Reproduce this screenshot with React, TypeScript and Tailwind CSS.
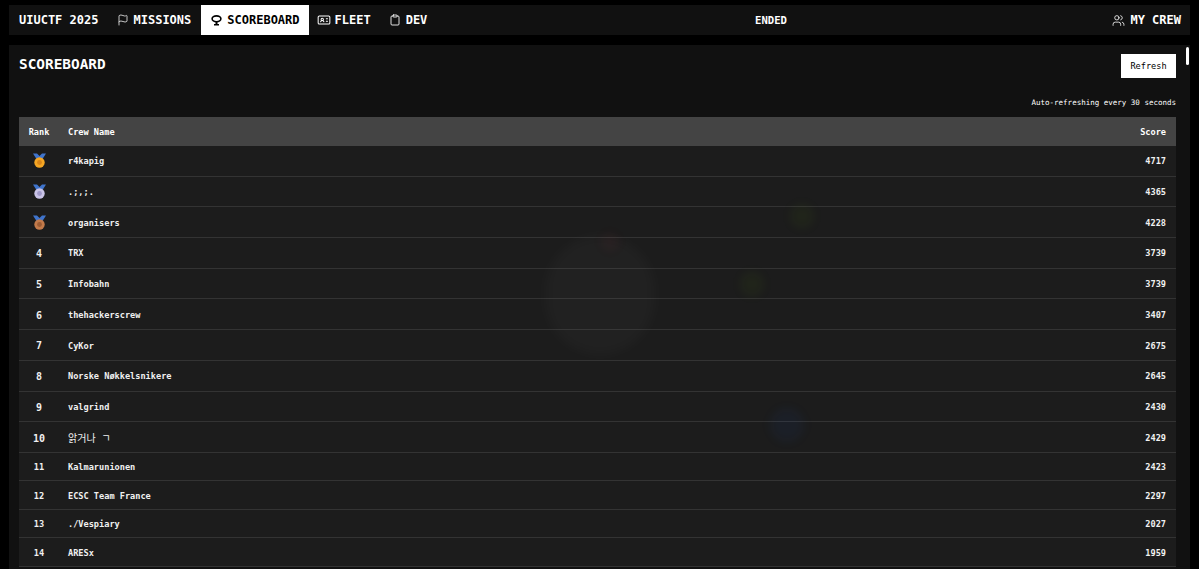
import { Clipboard, Flag, IdCard, Users } from "lucide-react";

const rows = [
  { rank: 1, name: "r4kapig", score: 4717 },
  { rank: 2, name: ".;,;.", score: 4365 },
  { rank: 3, name: "organisers", score: 4228 },
  { rank: 4, name: "TRX", score: 3739 },
  { rank: 5, name: "Infobahn", score: 3739 },
  { rank: 6, name: "thehackerscrew", score: 3407 },
  { rank: 7, name: "CyKor", score: 2675 },
  { rank: 8, name: "Norske Nøkkelsnikere", score: 2645 },
  { rank: 9, name: "valgrind", score: 2430 },
  { rank: 10, name: "앍거나 ㄱ", score: 2429 },
  { rank: 11, name: "Kalmarunionen", score: 2423 },
  { rank: 12, name: "ECSC Team France", score: 2297 },
  { rank: 13, name: "./Vespiary", score: 2027 },
  { rank: 14, name: "ARESx", score: 1959 },
];

const medalColors: Record<number, { disc: string; inner: string }> = {
  1: { disc: "#f5a623", inner: "#d9851a" },
  2: { disc: "#c9c3e6", inner: "#9f98c8" },
  3: { disc: "#c27a4a", inner: "#9c5c34" },
};

function Medal({ rank }: { rank: number }) {
  const c = medalColors[rank];
  return (
    <svg width="13" height="15" viewBox="0 0 13 15" className="mx-auto -mt-[2px]">
      <path d="M0 0.5 L4 0.5 L6.5 3 L9 0.5 L13 0.5 L9.5 6 L3.5 6 Z" fill="#3f74cc" />
      <circle cx="6.5" cy="9.5" r="5.2" fill={c.disc} />
      <circle cx="6.5" cy="9.5" r="2.4" fill={c.inner} />
    </svg>
  );
}

function TrophyIcon() {
  return (
    <svg width="11" height="11" viewBox="0 0 11 11">
      <ellipse cx="5.5" cy="3.8" rx="4.4" ry="2.9" fill="none" stroke="currentColor" strokeWidth="1.6" />
      <rect x="4.5" y="6.5" width="2" height="2.5" fill="currentColor" />
      <rect x="3" y="9" width="5" height="1.5" fill="currentColor" />
    </svg>
  );
}

function NavItem({ icon, label, className }: { icon: React.ReactNode; label: string; className: string }) {
  return (
    <div className={`h-full flex items-center text-[12px] font-bold ${className}`}>
      {icon}
      <span>{label}</span>
    </div>
  );
}

export default function App() {
  return (
    <div className="relative h-[569px] overflow-hidden bg-black pt-[5px] px-[9px] font-['DejaVu_Sans_Mono','Noto_Sans_CJK_KR',monospace] text-white">
      <nav className="h-[30px] flex items-center justify-between bg-[#111111]">
        <div className="h-full flex items-center">
          <span className="pl-[10px] pr-[10px] text-[12px] font-bold">UIUCTF 2025</span>
          <NavItem icon={<Flag size={12} strokeWidth={1.5} />} label="MISSIONS" className="gap-[4px] pl-[9px] pr-[10px]" />
          <NavItem icon={<TrophyIcon />} label="SCOREBOARD" className="gap-[5px] pl-[10px] pr-[9px] bg-white text-black" />
          <NavItem icon={<IdCard size={14} strokeWidth={1.75} />} label="FLEET" className="gap-[4px] pl-[8px] pr-[9px]" />
          <NavItem icon={<Clipboard size={12} strokeWidth={1.75} />} label="DEV" className="gap-[5px] pl-[9px] pr-[9px]" />
        </div>
        <div className="flex items-center gap-[5px] pr-[9px] text-[12px] font-bold">
          <Users size={13} strokeWidth={1.5} />
          <span>MY CREW</span>
        </div>
      </nav>

      <div className="absolute left-[755px] top-[14px] text-[10.6px] leading-[13px] font-bold">ENDED</div>

      <main className="relative mt-[10px] h-[524px] overflow-hidden bg-[#111111] pl-[9px] pr-[14px] pt-[9px]">
        <div className="flex items-start justify-between">
          <h1 className="pl-[1px] text-[14.4px] leading-[20px] font-bold">SCOREBOARD</h1>
          <button className="h-[24px] w-[55px] bg-white text-black text-[8.6px]">Refresh</button>
        </div>
        <p className="mt-[20px] text-right text-[7.5px] leading-[10px]">Auto-refreshing every 30 seconds</p>
        <div className="ml-[1px] mt-[9px] bg-[#1c1c1c]">
          <div className="h-[29px] pt-[2px] flex items-center justify-between bg-[#444444] text-[8.6px] font-bold text-white">
            <div className="flex items-center">
              <span className="w-[40px] text-center">Rank</span>
              <span className="pl-[9px]">Crew Name</span>
            </div>
            <span className="pr-[10px]">Score</span>
          </div>
          {rows.map((r) => (
            <div
              key={r.rank}
              className={`flex items-center justify-between border-b border-[#333333] pt-[2px] text-[8.6px] font-bold text-[#f0f0f0] ${r.rank <= 10 ? "h-[30.7px]" : "h-[28.5px]"}`}
            >
              <div className="flex items-center">
                <span className={`w-[40px] text-center ${r.rank <= 10 ? "text-[10px]" : ""}`}>
                  {r.rank <= 3 ? <Medal rank={r.rank} /> : r.rank}
                </span>
                <span className={`pl-[9px] ${r.rank === 10 ? "text-[10px] font-normal" : ""}`}>{r.name}</span>
              </div>
              <span className="pr-[10px]">{r.score}</span>
            </div>
          ))}
        </div>
        <div className="absolute right-[1px] top-[2px] h-[18px] w-[3px] rounded-full bg-white" />
      </main>

      <div className="pointer-events-none absolute left-[545px] top-[235px] h-[120px] w-[110px] rounded-full bg-white/[0.025] blur-[6px]" />
      <div className="pointer-events-none absolute left-[600px] top-[232px] h-[20px] w-[20px] rounded-full bg-red-500/[0.03] blur-[4px]" />
      <div className="pointer-events-none absolute left-[790px] top-[204px] h-[24px] w-[24px] rounded-full bg-lime-500/[0.05] blur-[5px]" />
      <div className="pointer-events-none absolute left-[740px] top-[272px] h-[24px] w-[24px] rounded-full bg-lime-500/[0.05] blur-[5px]" />
      <div className="pointer-events-none absolute left-[770px] top-[408px] h-[34px] w-[34px] rounded-full bg-blue-600/[0.05] blur-[5px]" />
    </div>
  );
}
